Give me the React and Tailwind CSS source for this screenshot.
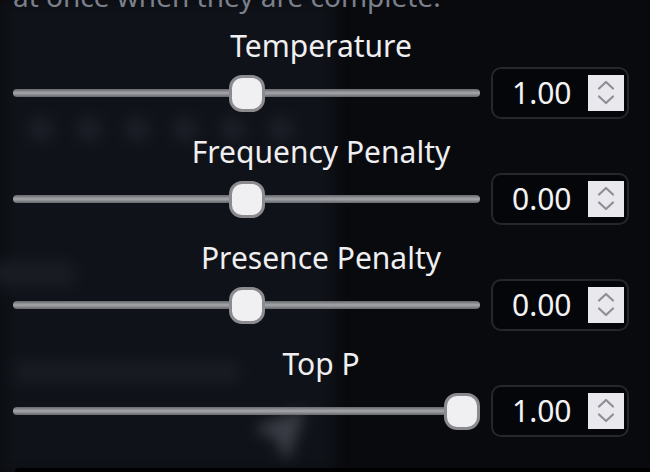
import { useState } from "react";
import { Send } from "lucide-react";

const params = [
  { key: "temperature", label: "Temperature", min: 0, max: 2, value: 1 },
  { key: "frequency", label: "Frequency Penalty", min: -2, max: 2, value: 0 },
  { key: "presence", label: "Presence Penalty", min: -2, max: 2, value: 0 },
  { key: "topP", label: "Top P", min: 0, max: 1, value: 1 },
];

function Spinner() {
  return (
    <div className="ml-auto mr-[3px] h-[36px] w-[36px] bg-[#e9e8ed]">
      <svg width="36" height="36" viewBox="0 0 36 36" fill="none">
        <path d="M11 13.5 L18 7 L25 13.5" stroke="#8f8d98" strokeWidth="2.2" strokeLinecap="round" strokeLinejoin="round" />
        <path d="M11 21.5 L18 28 L25 21.5" stroke="#8f8d98" strokeWidth="2.2" strokeLinecap="round" strokeLinejoin="round" />
      </svg>
    </div>
  );
}

function ParamRow({ item, value }) {
  const pct = (value - item.min) / (item.max - item.min);
  return (
    <div className="mb-[15px]">
      <div className="text-center text-[30px] leading-[36px] text-[#efeff1]">
        {item.label}
      </div>
      <div className="mt-[3px] flex h-[52px] items-center gap-[11px]">
        <div className="relative flex h-[37px] flex-1 items-center">
          <div className="h-2 w-full rounded-full bg-[linear-gradient(to_bottom,#66676c,#a6a7ab,#66676c)]" />
          {/* thumb sits on the track */}
          <div
            className="absolute top-0 h-[37px] w-[36px] rounded-[13px] border-[3px] border-[#8b8b8f] bg-[#f0f0f2]"
            style={{ left: `calc(${pct} * (100% - 36px))` }}
          />
        </div>
        <div className="flex h-[52px] w-[138px] items-center rounded-[10px] border-2 border-[#25272c] bg-[#050609] pl-[19px]">
          <span className="text-[30px] leading-none text-[#f3f3f5]">
            {value.toFixed(2)}
          </span>
          <Spinner />
        </div>
      </div>
    </div>
  );
}

export default function App() {
  const [values] = useState(() =>
    Object.fromEntries(params.map((p) => [p.key, p.value]))
  );

  return (
    <div className="relative h-[472px] w-[650px] overflow-hidden bg-[#090a0e] font-['Noto_Sans',sans-serif]">
      {/* blurred page behind the sheet */}
      <div className="pointer-events-none absolute inset-0 flex blur-[7px]">
        <div className="flex h-full w-[335px] flex-col bg-[#0f1218] pl-[28px] pt-[116px]">
          <div className="flex gap-[22px]">
            {[0, 1, 2, 3, 4, 5].map((i) => (
              <div key={i} className="h-[26px] w-[26px] rounded-full bg-[#1b1e26]" />
            ))}
          </div>
          <div className="-ml-[38px] mt-[120px] h-[24px] w-[85px] rounded-md bg-[#191c23]" />
          <div className="-ml-[13px] mt-[75px] h-[22px] w-[225px] rounded-md bg-[#181b22]" />
          <Send className="ml-[226px] mt-[26px]" size={52} color="#3a3d45" fill="#3a3d45" />
        </div>
      </div>
      <div className="absolute bottom-0 left-[15px] right-0 h-[4px] rounded-tl-[6px] bg-black" />

      <div className="relative flex flex-col pl-[13px] pr-[21px]">
        <p className="-mt-[20px] whitespace-nowrap text-[28px] leading-[32px] text-[#7b808b]">
          at once when they are complete.
        </p>
        <div className="mt-4">
          {params.map((p) => (
            <ParamRow key={p.key} item={p} value={values[p.key]} />
          ))}
        </div>
      </div>
    </div>
  );
}
